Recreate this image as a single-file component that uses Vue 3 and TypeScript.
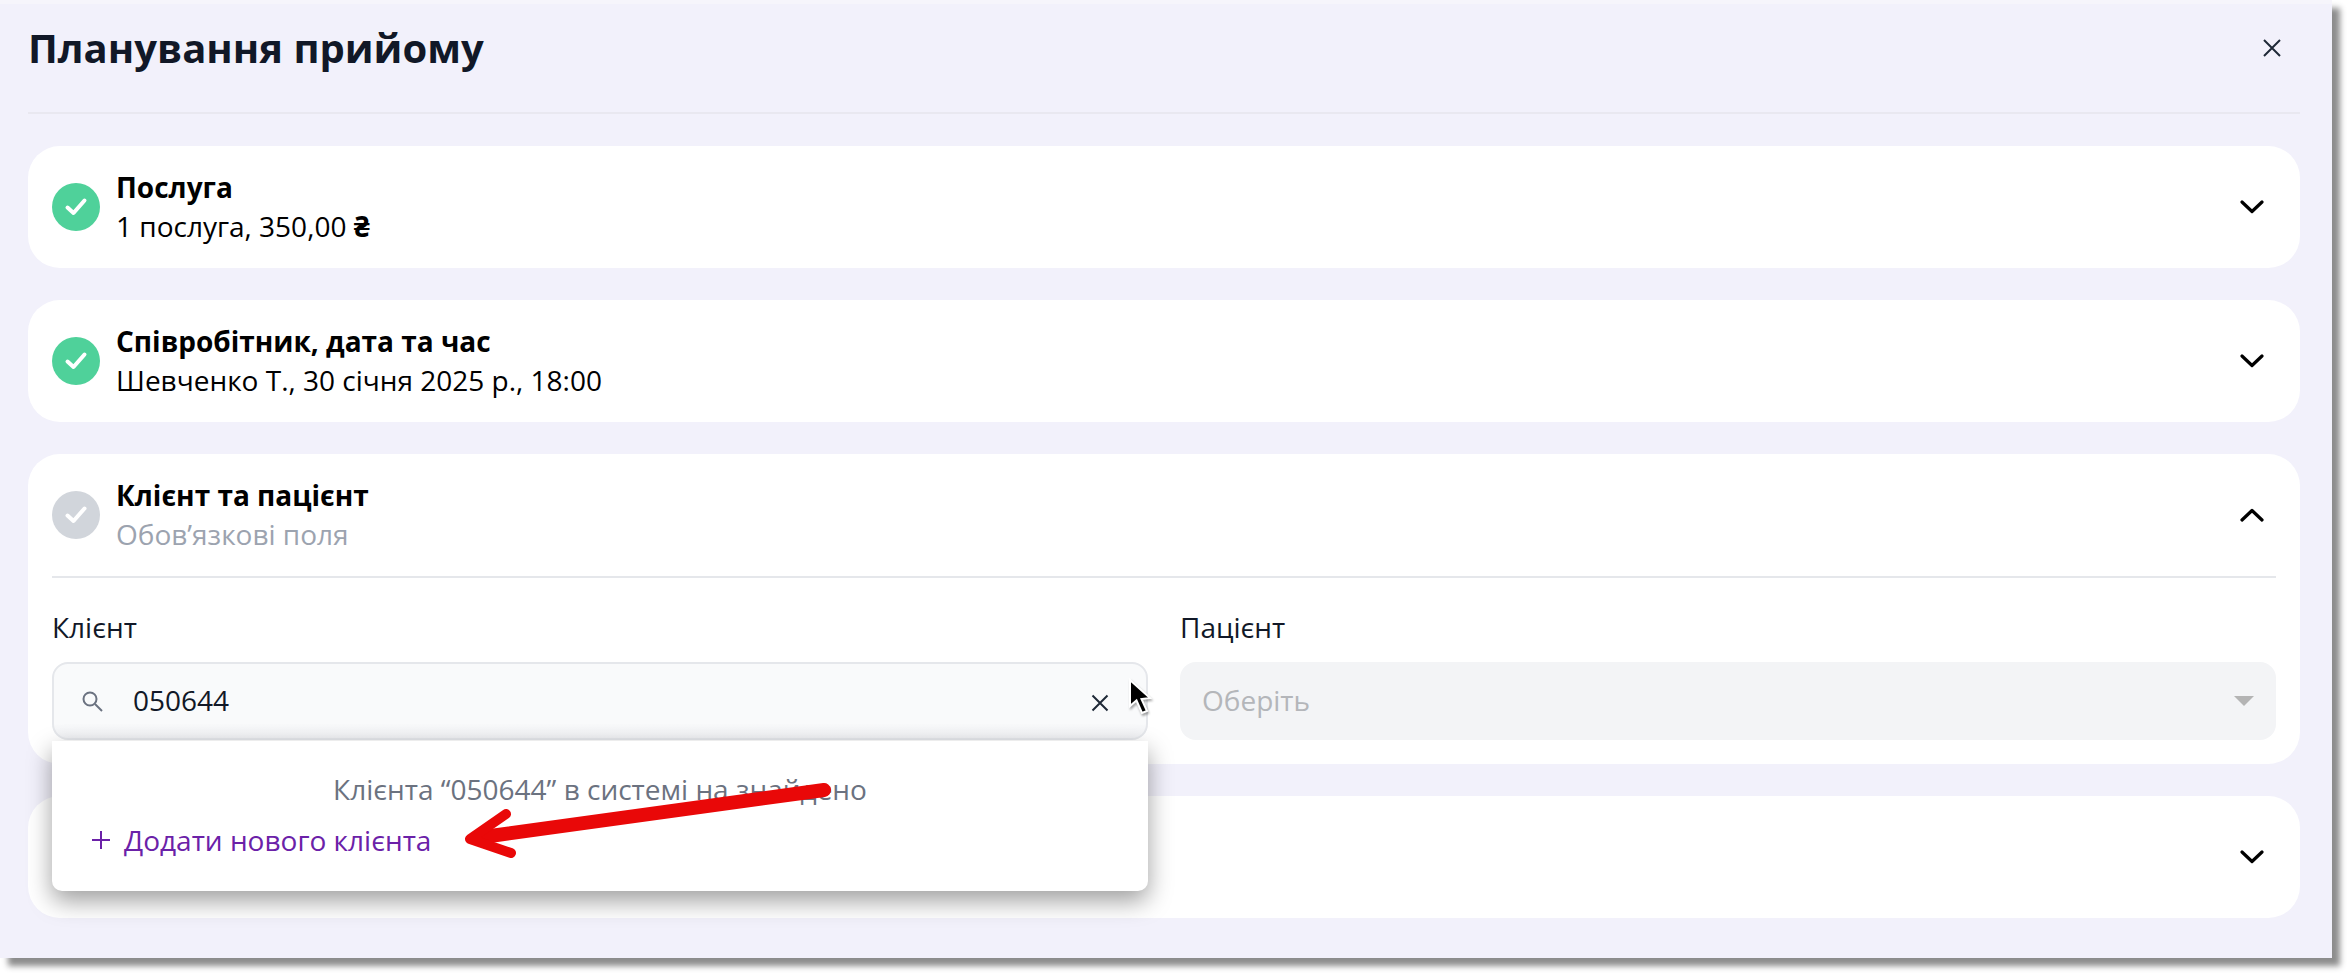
<script setup lang="ts">
interface Section {
  title: string;
  sub: string;
  currency?: string;
  done: boolean;
}

const services: Section = { title: "Послуга", sub: "1 послуга, 350,00 ", currency: "₴", done: true };
const staff: Section = {
  title: "Співробітник, дата та час",
  sub: "Шевченко Т., 30 січня 2025 р., 18:00",
  done: true,
};
const client: Section = { title: "Клієнт та пацієнт", sub: "Обов’язкові поля", done: false };
const doneSections = [services, staff];
</script>

<template>
  <div class="page">
    <div class="window">
      <header class="head">
        <h1>Планування прийому</h1>
        <svg class="close" width="20" height="20" viewBox="0 0 20 20">
          <path d="M2 2 18 18M18 2 2 18" />
        </svg>
      </header>

      <section v-for="s in doneSections" :key="s.title" class="card">
        <div class="row">
          <span class="tick done">
            <svg width="24" height="24" viewBox="0 0 24 24"><path d="M3.5 12.5 9.5 18 20.5 5.5" /></svg>
          </span>
          <div class="texts">
            <div class="title">{{ s.title }}</div>
            <div class="sub">{{ s.sub }}<b v-if="s.currency" class="cur">{{ s.currency }}</b></div>
          </div>
          <svg class="chev" width="24" height="14" viewBox="0 0 24 14"><path d="M2 2 12 11.5 22 2" /></svg>
        </div>
      </section>

      <section class="card open">
        <div class="row split">
          <span class="tick">
            <svg width="24" height="24" viewBox="0 0 24 24"><path d="M3.5 12.5 9.5 18 20.5 5.5" /></svg>
          </span>
          <div class="texts">
            <div class="title">{{ client.title }}</div>
            <div class="sub muted">{{ client.sub }}</div>
          </div>
          <svg class="chev" width="24" height="14" viewBox="0 0 24 14"><path d="M2 12 12 2.5 22 12" /></svg>
        </div>
        <div class="fields">
          <div class="field">
            <label>Клієнт</label>
            <div class="control search">
              <svg class="glass" width="24" height="24" viewBox="0 0 24 24">
                <circle cx="10" cy="10" r="6.5" />
                <path d="M15 15 22 22" />
              </svg>
              <span class="value">050644</span>
              <svg class="clear" width="18" height="18" viewBox="0 0 18 18"><path d="M1.5 1.5 16.5 16.5M16.5 1.5 1.5 16.5" /></svg>
            </div>
            <div class="menu">
              <p class="empty">Клієнта “050644” в системі на знайдено</p>
              <div class="add">
                <svg class="plus" width="18" height="18" viewBox="0 0 18 18"><path d="M9 0V18M0 9H18" /></svg>
                Додати нового клієнта
              </div>
            </div>
          </div>
          <div class="field">
            <label>Пацієнт</label>
            <div class="control disabled">
              <span class="value">Оберіть</span>
              <i class="caret"></i>
            </div>
          </div>
        </div>
      </section>

      <section class="card">
        <div class="row end">
          <svg class="chev" width="24" height="14" viewBox="0 0 24 14"><path d="M2 2 12 11.5 22 2" /></svg>
        </div>
      </section>

      <!-- annotation arrow drawn on top of the screenshot -->
      <svg class="arrow" width="400" height="90" viewBox="0 0 400 90">
        <path class="shaft" d="M369 14 28 61" />
        <path class="head-line" d="M51 38 15 63 56 77" />
      </svg>

      <svg class="cursor" width="28" height="40" viewBox="0 0 28 40">
        <path d="M3 2 3 28 9.5 22.5 15 35 20 33 14.5 21 23 20Z" />
      </svg>
    </div>
  </div>
</template>

<style>
html,
body {
  background: #fff;
}
</style>

<style scoped>
.page {
  box-sizing: border-box;
  width: 2352px;
  height: 978px;
  overflow: hidden;
}
.window {
  position: relative;
  box-sizing: border-box;
  width: 2332px;
  height: 958px;
  padding: 0 32px 0 28px;
  background: linear-gradient(#f6f5fb 4px, #f2f1fb 4px);
  box-shadow: 8px 8px 6px rgba(0, 0, 0, 0.45);
  font-family: "Open Sans", "Noto Sans", sans-serif;
  color: #000;
}
.head {
  display: flex;
  align-items: center;
  justify-content: space-between;
  box-sizing: border-box;
  height: 114px;
  padding-bottom: 16px;
  margin-bottom: 32px;
  border-bottom: 2px solid #e9e8f0;
}
.head h1 {
  margin: 0;
  font-size: 40px;
  font-weight: 700;
  line-height: 56px;
  color: #111827;
}
.close {
  margin-right: 18px;
  fill: none;
  stroke: #1f2937;
  stroke-width: 2;
}
.card {
  box-sizing: border-box;
  margin-bottom: 32px;
  padding: 22px 24px 22px;
  min-height: 122px;
  border-radius: 32px;
  background: #fff;
}
.card.open {
  padding-bottom: 24px;
}
.row {
  display: flex;
  align-items: center;
  gap: 16px;
}
.row.split {
  padding-bottom: 22px;
  border-bottom: 2px solid #e5e7eb;
}
.row.end {
  justify-content: flex-end;
  min-height: 78px;
}
.tick {
  display: flex;
  flex: none;
  align-items: center;
  justify-content: center;
  width: 48px;
  height: 48px;
  border-radius: 50%;
  background: #d1d5db;
}
.tick.done {
  background: #4fd19a;
}
.tick path {
  fill: none;
  stroke: #fff;
  stroke-width: 4;
  stroke-linecap: round;
  stroke-linejoin: round;
}
.texts {
  flex: 1;
  min-width: 0;
}
.title {
  font-size: 28px;
  font-weight: 700;
  line-height: 39px;
}
.sub {
  font-size: 28px;
  line-height: 39px;
}
.sub.muted {
  color: #9ca3af;
}
.cur {
  font-weight: 700;
}
.chev {
  flex: none;
  margin-right: 12px;
  fill: none;
  stroke: #000;
  stroke-width: 3.2;
  stroke-linecap: round;
  stroke-linejoin: round;
}
.fields {
  display: grid;
  grid-template-columns: 1fr 1fr;
  gap: 32px;
  padding-top: 29px;
}
.field {
  position: relative;
}
.field label {
  display: block;
  margin-bottom: 15px;
  font-size: 28px;
  line-height: 40px;
  color: #111827;
}
.control {
  display: flex;
  align-items: center;
  box-sizing: border-box;
  height: 78px;
  padding: 0 22px;
  border-radius: 16px;
  font-size: 28px;
}
.search {
  padding-left: 26px;
  border: 2px solid #e5e7eb;
  background: linear-gradient(#f9fafb 80%, #f0f1f4);
  color: #111827;
}
.glass {
  flex: none;
  margin-right: 29px;
  fill: none;
  stroke: #6b7280;
  stroke-width: 2;
}
.value {
  flex: 1;
  padding-bottom: 2px;
}
.clear {
  flex: none;
  margin-top: 3px;
  margin-right: 15px;
  fill: none;
  stroke: #1f2937;
  stroke-width: 2;
}
.disabled {
  justify-content: space-between;
  background: #f3f4f6;
  color: #b4b6ba;
}
.caret {
  border-top: 10px solid #b4b4b4;
  border-right: 10px solid transparent;
  border-left: 10px solid transparent;
}
.menu {
  position: absolute;
  top: 100%;
  right: 0;
  left: 0;
  z-index: 2;
  box-sizing: border-box;
  height: 150px;
  margin-top: 1px;
  padding: 28px 40px 0;
  border-radius: 0 0 10px 10px;
  background: #fff;
  box-shadow: 0 10px 24px rgba(0, 0, 0, 0.38);
}
.empty {
  margin: 0;
  font-size: 28px;
  line-height: 40px;
  text-align: center;
  color: #6b7280;
}
.add {
  display: flex;
  align-items: center;
  margin-top: 11px;
  font-size: 28px;
  line-height: 40px;
  color: #6b21a8;
}
.plus {
  flex: none;
  margin-right: 14px;
  fill: none;
  stroke: #6b21a8;
  stroke-width: 2;
}
.arrow {
  position: absolute;
  top: 776px;
  left: 455px;
  z-index: 3;
  fill: none;
  stroke: #e90808;
  stroke-linecap: round;
  stroke-linejoin: round;
}
.shaft {
  stroke-width: 14;
}
.head-line {
  stroke-width: 10;
}
.cursor {
  position: absolute;
  top: 678px;
  left: 1127px;
  z-index: 3;
  fill: #000;
  stroke: #fff;
  stroke-width: 2;
  filter: drop-shadow(1px 2px 1px rgba(0, 0, 0, 0.35));
}
</style>
